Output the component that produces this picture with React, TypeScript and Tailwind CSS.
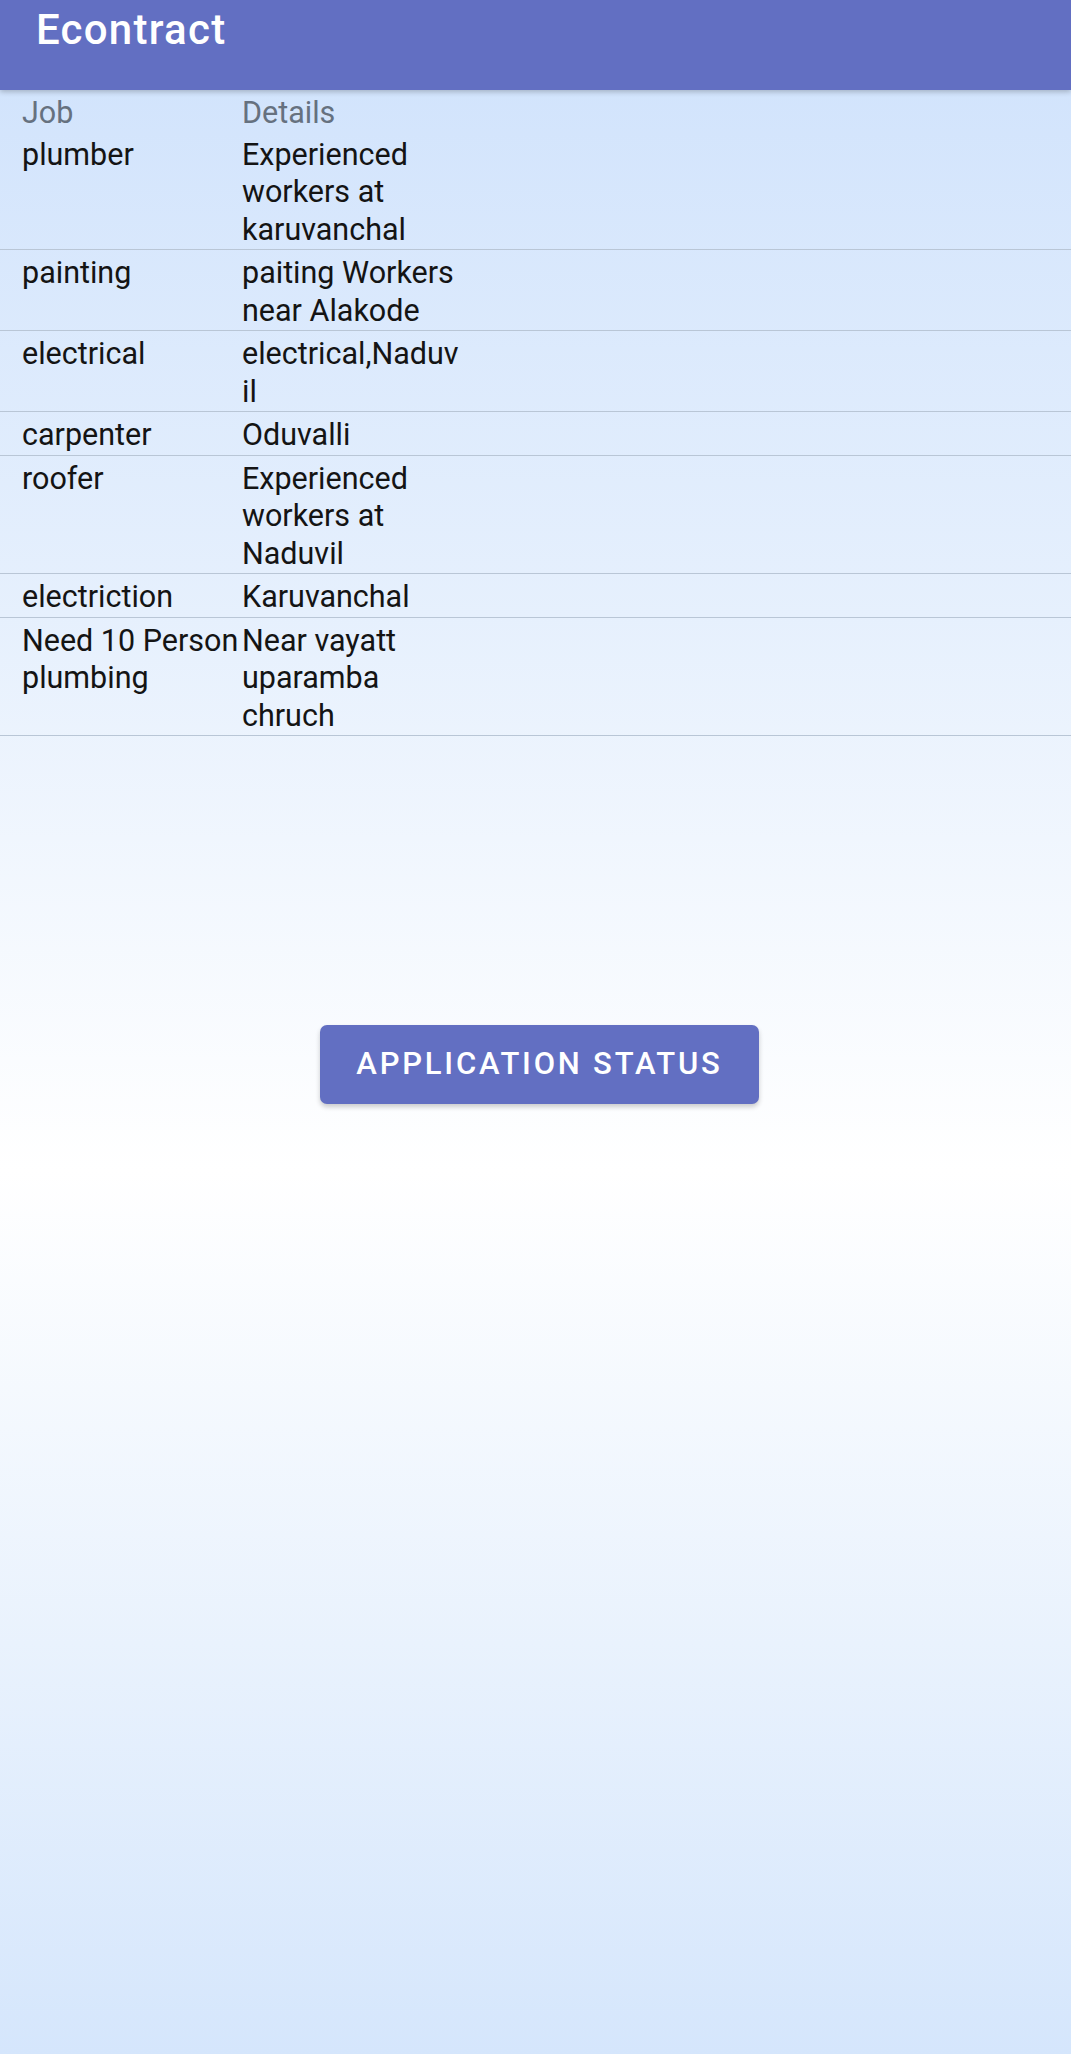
import React from 'react'

type Job = { job: string; details: string }

const jobs: Job[] = [
  { job: 'plumber', details: 'Experienced workers at karuvanchal' },
  { job: 'painting', details: 'paiting Workers near Alakode' },
  { job: 'electrical', details: 'electrical,Naduvil' },
  { job: 'carpenter', details: 'Oduvalli' },
  { job: 'roofer', details: 'Experienced workers at Naduvil' },
  { job: 'electriction', details: 'Karuvanchal' },
  { job: 'Need 10 Person plumbing', details: 'Near vayatt uparamba chruch' },
]

export default function App() {
  return (
    <div className="min-h-[2054px] w-full bg-[linear-gradient(180deg,#cfe2fc_0%,#e6f0fd_30%,#ffffff_57%,#e9f2fd_80%,#d5e6fc_100%)] font-['Roboto',sans-serif]">
      <header className="relative z-10 h-[90px] bg-[#626fc2] pl-[36px] shadow-[0_2px_5px_rgba(0,0,0,0.22)]">
        <h1 className="pt-[6px] text-[42px] font-medium leading-[48px] tracking-[0.03em] text-white">Econtract</h1>
      </header>

      <div className="text-[30.5px] leading-[37.5px]">
        <div className="grid grid-cols-[220px_220px] pl-[22px] pt-[4px] text-[#66717f]">
          <div>Job</div>
          <div>Details</div>
        </div>
        {jobs.map((j, i) => (
          <div key={i} className="grid grid-cols-[220px_220px] border-b-[1.5px] border-[#b9c6d6] pl-[22px] pt-[4px] pb-[1px] text-[#141414]">
            <div className="[overflow-wrap:anywhere]">{j.job}</div>
            <div className="[overflow-wrap:anywhere]">{j.details}</div>
          </div>
        ))}
      </div>

      <div className="flex justify-center pt-[289px] pl-[8px]">
        <button className="h-[79px] w-[439px] rounded-[7px] bg-[#626fc2] text-[31px] font-medium tracking-[0.09em] text-white shadow-[0_3px_5px_rgba(0,0,0,0.2)]">
          APPLICATION STATUS
        </button>
      </div>
    </div>
  )
}
